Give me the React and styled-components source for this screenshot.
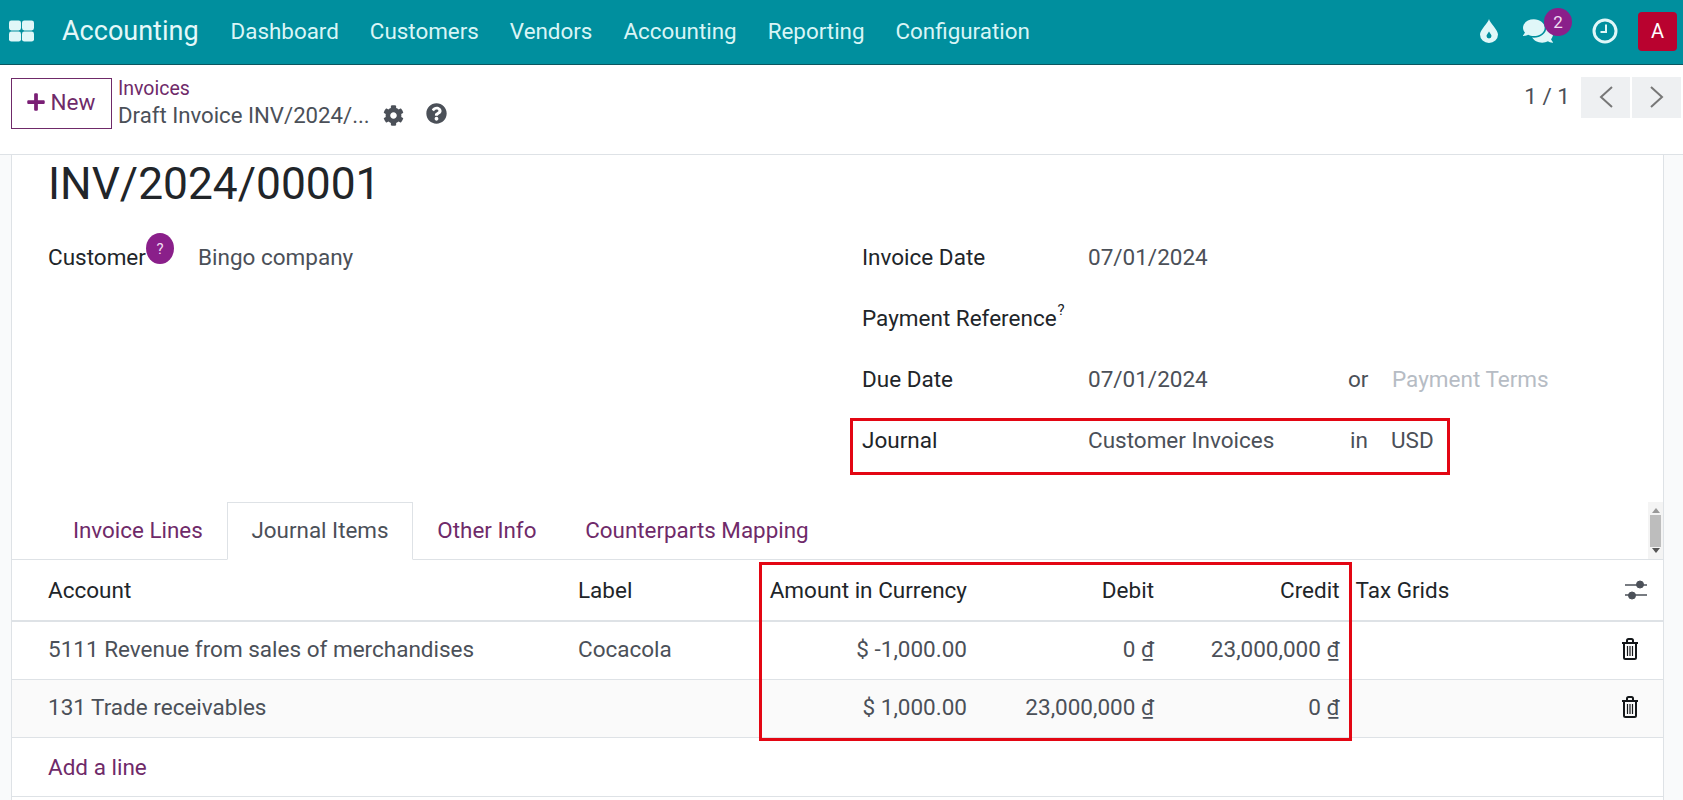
import React from "react";
import styled, { createGlobalStyle } from "styled-components";
import { FaPlus, FaCog, FaQuestionCircle, FaComments } from "react-icons/fa";

const GlobalStyle = createGlobalStyle`
  html, body {
    margin: 0;
    height: 100%;
    background: #f9fafb;
    font-family: Roboto, "Liberation Sans", sans-serif;
    font-size: 22.5px;
    color: #212529;
  }
  * {
    box-sizing: border-box;
  }
`;

const Page = styled.div`
  width: 1683px;
  height: 800px;
  overflow: hidden;
  display: flex;
  flex-direction: column;
`;

const NavBar = styled.header`
  height: 65px;
  flex: none;
  background: #008f9e;
  border-bottom: 1px solid #0b5660;
  display: flex;
  align-items: center;
  padding: 0 6px 2px 9px;
  color: #e0f7f8;
`;

const AppsIcon = styled.svg`
  width: 25px;
  height: 22px;
  margin-right: 28px;
`;

const Brand = styled.div`
  font-size: 27px;
  margin-right: 32px;
  color: #e4f8f9;
`;

const NavLink = styled.a`
  margin-right: 31px;
  font-size: 22.4px;
  color: #d9f5f6;
`;

const NavTools = styled.div`
  margin-left: auto;
  display: flex;
  align-items: center;
`;

const ToolIcon = styled.span`
  position: relative;
  display: flex;
  justify-content: center;
  width: ${(p) => p.$w}px;
  margin-left: ${(p) => p.$gap || 0}px;
  color: #e0f7f8;
`;

const Badge = styled.span`
  position: absolute;
  top: -8px;
  left: 22px;
  width: 28px;
  height: 28px;
  border-radius: 50%;
  background: #8a1f8a;
  color: #f1dcf1;
  font-size: 17px;
  display: flex;
  align-items: center;
  justify-content: center;
`;

const Avatar = styled.div`
  width: 39px;
  height: 39px;
  border-radius: 4px;
  background: #b9022f;
  color: #fff;
  font-size: 20px;
  display: flex;
  align-items: center;
  justify-content: center;
  margin-left: 19px;
`;

const ControlPanel = styled.div`
  height: 90px;
  flex: none;
  background: #fff;
  border-bottom: 1px solid #dee2e6;
  display: flex;
  padding: 12px 2px 0 11px;
`;

const NewButton = styled.button`
  width: 101px;
  height: 51px;
  margin-top: 1px;
  background: #fff;
  border: 1px solid #6f2a69;
  color: #6f2a69;
  font: inherit;
  display: flex;
  align-items: center;
  justify-content: center;
  gap: 5px;
  padding: 0 2px 3px 0;
  svg {
    font-size: 20px;
    color: #7a1f75;
  }
`;

const Breadcrumbs = styled.div`
  margin-left: 6px;
  line-height: 26px;
  margin-top: -1px;
`;

const CrumbLink = styled.div`
  color: #6f2a69;
  font-size: 19.5px;
`;

const CrumbCurrent = styled.div`
  display: flex;
  align-items: center;
  font-size: 22.2px;
  color: #4b5058;
  svg {
    font-size: 21px;
    margin-left: 13px;
  }
  svg + svg {
    margin-left: 22px;
    margin-top: -4px;
  }
`;

const Pager = styled.div`
  margin-left: auto;
  display: flex;
  align-items: flex-start;
  gap: 2px;
  color: #4b5058;
`;

const PagerText = styled.span`
  margin-right: 9px;
  line-height: 38px;
`;

const PagerButton = styled.button`
  width: 49px;
  height: 41px;
  border: none;
  background: #eef0f2;
  padding: 0 0 2px;
  display: flex;
  align-items: center;
  justify-content: center;
`;

const Content = styled.main`
  flex: 1;
  padding: 0 19px 0 11px;
  min-height: 0;
`;

const Sheet = styled.div`
  height: 100%;
  background: #fff;
  border-left: 1px solid #dee2e6;
  border-right: 1px solid #dee2e6;
`;

const Title = styled.h1`
  margin: 0;
  padding: 1px 0 0 36px;
  font-size: 44.3px;
  font-weight: 400;
  line-height: 56px;
`;

const FormGrid = styled.div`
  display: grid;
  grid-template-columns: 814px 1fr;
  padding: 31px 0 0 36px;
  height: 290px;
`;

const FieldRow = styled.div`
  position: relative;
  display: flex;
  height: 61px;
  line-height: 28px;
`;

const FieldLabel = styled.div`
  width: ${(p) => p.$w}px;
  flex: none;
  display: flex;
  align-items: flex-start;
`;

const FieldValue = styled.div`
  width: ${(p) => p.$w}px;
  flex: none;
  color: ${(p) => (p.$muted ? "#b6bcc4" : "#4b5058")};
`;

const HelpBadge = styled.span`
  width: 28px;
  height: 31px;
  border-radius: 50%;
  background: #8a1f8a;
  color: #f1dcf1;
  font-size: 15px;
  display: flex;
  align-items: center;
  justify-content: center;
  margin-top: -10px;
  flex: none;
`;

const HelpMark = styled.sup`
  font-size: 15px;
  line-height: 0;
  margin: 6px 0 0 1px;
`;

const Highlight = styled.div`
  position: absolute;
  top: ${(p) => p.$top}px;
  left: ${(p) => p.$left}px;
  width: ${(p) => p.$w}px;
  height: ${(p) => p.$h}px;
  border: 3px solid #e30613;
  pointer-events: none;
`;

const TabBar = styled.nav`
  position: relative;
  display: flex;
  height: 58px;
  padding-left: 36.5px;
  border-bottom: 1px solid #dee2e6;
`;

const Tab = styled.a`
  height: 58px;
  padding: 13px 23.4px 0;
  font-size: 22.4px;
  line-height: 28px;
  margin-bottom: -1px;
  color: ${(p) => (p.$active ? "#4b5058" : "#6f2a69")};
  background: ${(p) => (p.$active ? "#fff" : "transparent")};
  border: 1px solid ${(p) => (p.$active ? "#dee2e6" : "transparent")};
  border-bottom-color: ${(p) => (p.$active ? "#fff" : "transparent")};
`;

const ScrollBar = styled.div`
  position: absolute;
  top: 0;
  right: 0;
  width: 15px;
  height: 57px;
  background: #f4f4f4;
  display: flex;
  flex-direction: column;
  align-items: center;
  justify-content: space-between;
  padding: 6px 0;
  color: #777;
`;

const ScrollThumb = styled.div`
  width: 11px;
  height: 32px;
  background: #bdbdbd;
`;

const Table = styled.div`
  position: relative;
`;

const Row = styled.div`
  display: grid;
  grid-template-columns: 558px 190px 215px 187px 185.5px 262px 1fr;
  align-items: center;
  height: ${(p) => p.$h}px;
  padding-bottom: ${(p) => (p.$body ? "3px" : "0")};
  background: ${(p) => (p.$alt ? "#fafafa" : "#fff")};
  border-bottom: ${(p) => (p.$head ? "2px" : "1px")} solid #dee2e6;
`;

const Cell = styled.div`
  padding: 0 8px;
  white-space: nowrap;
  text-align: ${(p) => (p.$right ? "right" : "left")};
  color: ${(p) => (p.$head ? "#212529" : "#4b5058")};
  &:first-child {
    padding-left: 36px;
  }
`;

const IconCell = styled.div`
  display: flex;
  justify-content: center;
  margin-left: ${(p) => (p.$head ? "0" : "-12px")};
`;

const Currency = styled.span`
  text-decoration: underline;
`;

const AddLine = styled.a`
  color: #6f2a69;
`;

const TrashIcon = () => (
  <svg width="18" height="22" viewBox="0 0 18 22" fill="none" stroke="#14171a" strokeWidth="2">
    <path d="M1 5h16M6 5V2.500Q6 1 7.500 1h3Q12 1 12 2.500V5" />
    <path d="M3 5v14.500Q3 21 4.500 21h9q1.500 0 1.500-1.500V5" />
    <path d="M6.500 8v10M9 8v10M11.500 8v10" strokeWidth="1.200" />
  </svg>
);

const SlidersIcon = () => (
  <svg width="24" height="24" viewBox="0 0 24 24" fill="#4b5058" stroke="#4b5058">
    <path d="M1 7h22M1 17h22" strokeWidth="1.500" />
    <circle cx="16" cy="6.500" r="3.500" />
    <circle cx="8" cy="17.500" r="3.500" />
  </svg>
);

const rows = [
  { account: "5111 Revenue from sales of merchandises", label: "Cocacola", amount: "$ -1,000.00", debit: "0", credit: "23,000,000" },
  { account: "131 Trade receivables", label: "", amount: "$ 1,000.00", debit: "23,000,000", credit: "0", alt: true }
];

export default function App() {
  return (
    <Page>
      <GlobalStyle />
      <NavBar>
        <AppsIcon viewBox="0 0 26 22" fill="#e0f7f8">
          <rect x="0" y="0" width="12.500" height="10.500" rx="2.500" />
          <rect x="13.500" y="0" width="12.500" height="10.500" rx="2.500" />
          <rect x="0" y="11.500" width="12.500" height="10.500" rx="2.500" />
          <rect x="13.500" y="11.500" width="12.500" height="10.500" rx="2.500" />
        </AppsIcon>
        <Brand>Accounting</Brand>
        <NavLink>Dashboard</NavLink>
        <NavLink>Customers</NavLink>
        <NavLink>Vendors</NavLink>
        <NavLink>Accounting</NavLink>
        <NavLink>Reporting</NavLink>
        <NavLink>Configuration</NavLink>
        <NavTools>
          <ToolIcon $w={20}>
            <svg width="18" height="24" viewBox="0 0 18 24">
              <path
                fill="#e0f7f8"
                fillRule="evenodd"
                d="M9 0C10 4 18 11 18 15.500A9 8.500 0 0 1 0 15.500C0 11 8 4 9 0ZM9 12.500C8 14.500 6.500 15.500 6.500 17A2.500 2.500 0 0 0 11.500 17C11.500 15.500 10 14.500 9 12.500Z"
              />
            </svg>
          </ToolIcon>
          <ToolIcon $w={32} $gap={23}>
            <FaComments size={30} />
            <Badge>2</Badge>
          </ToolIcon>
          <ToolIcon $w={28} $gap={37}>
            <svg width="26" height="26" viewBox="0 0 26 26" fill="none" stroke="#e0f7f8">
              <circle cx="13" cy="13" r="11" strokeWidth="3" />
              <path d="M14 6.500V14H8.500" strokeWidth="2" />
            </svg>
          </ToolIcon>
          <Avatar>A</Avatar>
        </NavTools>
      </NavBar>
      <ControlPanel>
        <NewButton>
          <FaPlus />
          New
        </NewButton>
        <Breadcrumbs>
          <CrumbLink>Invoices</CrumbLink>
          <CrumbCurrent>
            Draft Invoice INV/2024/...
            <FaCog />
            <FaQuestionCircle />
          </CrumbCurrent>
        </Breadcrumbs>
        <Pager>
          <PagerText>1 / 1</PagerText>
          <PagerButton>
            <svg width="16" height="24" viewBox="0 0 16 24" fill="none" stroke="#777" strokeWidth="2">
              <path d="M14 2L3 12l11 10" />
            </svg>
          </PagerButton>
          <PagerButton>
            <svg width="16" height="24" viewBox="0 0 16 24" fill="none" stroke="#777" strokeWidth="2">
              <path d="M2 2l11 10L2 22" />
            </svg>
          </PagerButton>
        </Pager>
      </ControlPanel>
      <Content>
        <Sheet>
          <Title>INV/2024/00001</Title>
          <FormGrid>
            <div>
              <FieldRow>
                <FieldLabel $w={150}>
                  Customer
                  <HelpBadge>?</HelpBadge>
                </FieldLabel>
                <FieldValue>Bingo company</FieldValue>
              </FieldRow>
            </div>
            <div>
              <FieldRow>
                <FieldLabel $w={226}>Invoice Date</FieldLabel>
                <FieldValue>07/01/2024</FieldValue>
              </FieldRow>
              <FieldRow>
                <FieldLabel $w={226}>
                  Payment Reference<HelpMark>?</HelpMark>
                </FieldLabel>
              </FieldRow>
              <FieldRow>
                <FieldLabel $w={226}>Due Date</FieldLabel>
                <FieldValue $w={260}>07/01/2024</FieldValue>
                <FieldValue $w={44}>or</FieldValue>
                <FieldValue $muted>Payment Terms</FieldValue>
              </FieldRow>
              <FieldRow>
                <FieldLabel $w={226}>Journal</FieldLabel>
                <FieldValue $w={262}>Customer Invoices</FieldValue>
                <FieldValue $w={41}>in</FieldValue>
                <FieldValue>USD</FieldValue>
                <Highlight $top={-8} $left={-12} $w={600} $h={57} />
              </FieldRow>
            </div>
          </FormGrid>
          <TabBar>
            <Tab>Invoice Lines</Tab>
            <Tab $active>Journal Items</Tab>
            <Tab>Other Info</Tab>
            <Tab>Counterparts Mapping</Tab>
            <ScrollBar>
              <svg width="8" height="5" viewBox="0 0 8 5" fill="#999">
                <path d="M4 0l4 5H0z" />
              </svg>
              <ScrollThumb />
              <svg width="8" height="5" viewBox="0 0 8 5" fill="#555">
                <path d="M0 0h8L4 5z" />
              </svg>
            </ScrollBar>
          </TabBar>
          <Table>
            <Row $head $h={62}>
              <Cell $head>Account</Cell>
              <Cell $head>Label</Cell>
              <Cell $head $right>Amount in Currency</Cell>
              <Cell $head $right>Debit</Cell>
              <Cell $head $right>Credit</Cell>
              <Cell $head>Tax Grids</Cell>
              <IconCell $head>
                <SlidersIcon />
              </IconCell>
            </Row>
            {rows.map((row) => (
              <Row key={row.account} $body $alt={row.alt} $h={58}>
                <Cell>{row.account}</Cell>
                <Cell>{row.label}</Cell>
                <Cell $right>{row.amount}</Cell>
                <Cell $right>
                  {row.debit} <Currency>₫</Currency>
                </Cell>
                <Cell $right>
                  {row.credit} <Currency>₫</Currency>
                </Cell>
                <Cell />
                <IconCell>
                  <TrashIcon />
                </IconCell>
              </Row>
            ))}
            <Row $h={59}>
              <Cell>
                <AddLine>Add a line</AddLine>
              </Cell>
            </Row>
            <Highlight $top={2} $left={747} $w={593} $h={179} />
          </Table>
        </Sheet>
      </Content>
    </Page>
  );
}
